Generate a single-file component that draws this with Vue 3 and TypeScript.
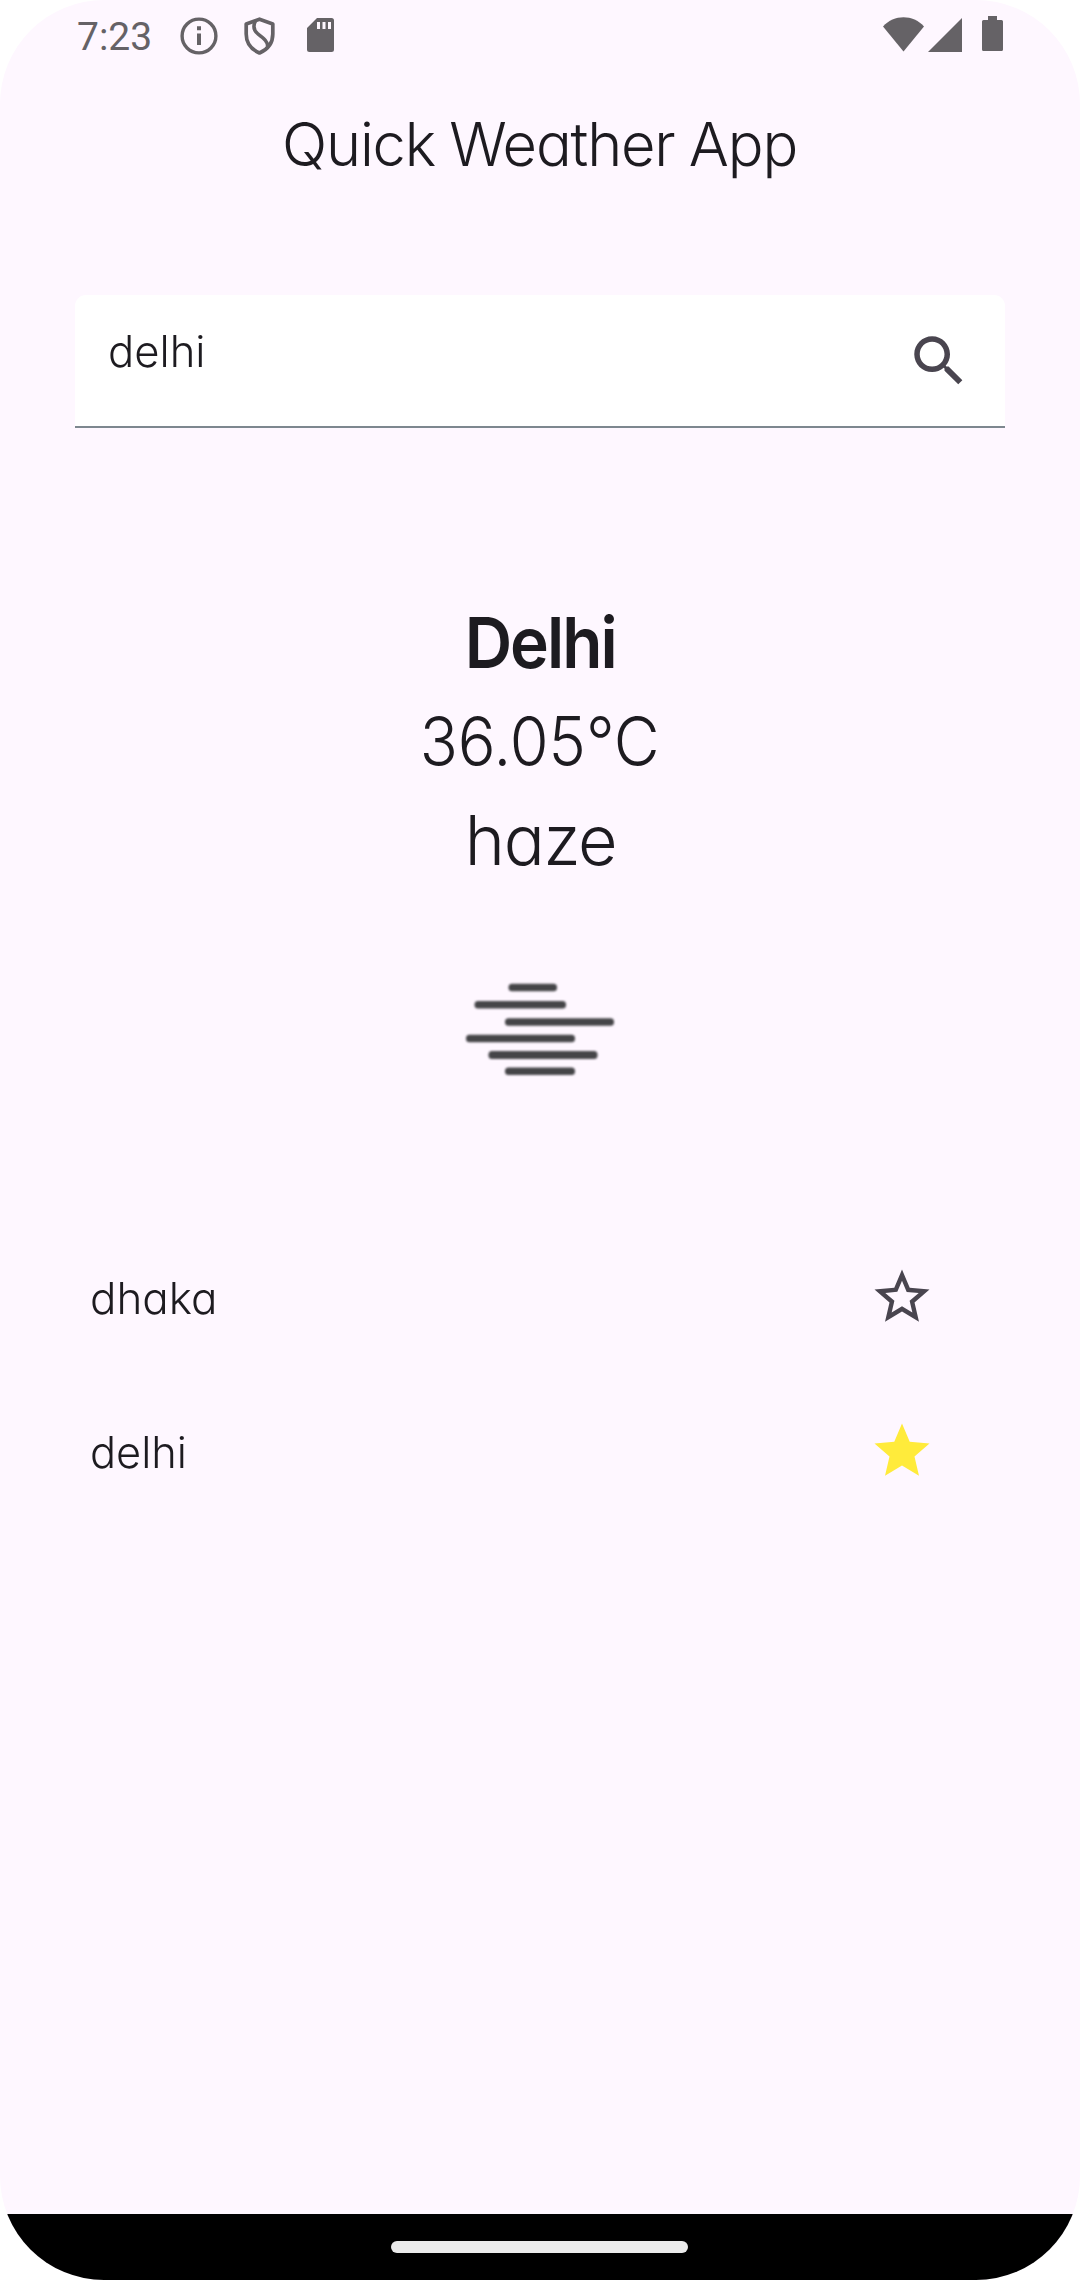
<script setup lang="ts">
import { ref, type Directive } from 'vue'

interface City {
  name: string
  starred: boolean
  width: number
}

const query = ref('delhi')
const cities = ref<City[]>([
  { name: 'dhaka', starred: false, width: 127.5 },
  { name: 'delhi', starred: true, width: 97 },
])

/** Scales a label horizontally so that it fills the given width. */
const vFit: Directive<HTMLElement, number> = {
  mounted(el, { value }) {
    const natural = el.getBoundingClientRect().width
    if (natural > 0) el.style.transform = `scaleX(${value / natural})`
  },
}
</script>

<template>
  <div class="screen">
    <header class="status">
      <span class="clock">7:23</span>
      <svg class="info" width="38" height="38" viewBox="0 0 38 38">
        <circle cx="19" cy="19" r="16.9" fill="none" stroke="currentColor" stroke-width="3.4" />
        <path d="M17 9.300h4v3.900h-4zM17 16.400h4v11.700h-4z" fill="currentColor" />
      </svg>
      <svg class="shield" width="31" height="38" viewBox="0 0 31 38">
        <path d="M15.500 2.200 28.800 6.900V17c0 8.800-4.800 15.300-13.300 19C7 32.300 2.200 25.800 2.200 17V6.900z" fill="none" stroke="currentColor" stroke-width="3.700" stroke-linejoin="round" />
        <path d="M11.500 4C8.800 9 9.200 13 14 17c6.500 5 9.800 7.500 9.600 12.500" fill="none" stroke="currentColor" stroke-width="3.500" />
      </svg>
      <svg class="sd" width="27" height="34" viewBox="0 0 27 34">
        <path fill-rule="evenodd" d="M10 0H24.500A2.500 2.500 0 0 1 27 2.500V31.500A2.500 2.500 0 0 1 24.500 34H2.500A2.500 2.500 0 0 1 0 31.500V10zM10 4V11H13V4zM15.500 4V11H18.500V4zM21 4V11H24V4z" fill="currentColor" />
      </svg>
      <svg class="wifi" width="41" height="35" viewBox="0 0 41 35">
        <path d="M0 9.500C11-2.800 30-2.800 41 9.500L20.500 34.500z" fill="currentColor" />
      </svg>
      <svg class="signal" width="34" height="34" viewBox="0 0 34 34">
        <path d="M34 0V34H0z" fill="currentColor" />
      </svg>
      <svg class="battery" width="21" height="35" viewBox="0 0 21 35">
        <path d="M6 0H15V4H19.500A1.500 1.500 0 0 1 21 5.500V33.500A1.500 1.500 0 0 1 19.500 35H1.500A1.500 1.500 0 0 1 0 33.500V5.500A1.500 1.500 0 0 1 1.500 4H6z" fill="currentColor" />
      </svg>
    </header>

    <h1 class="title"><span v-fit="515" class="label">Quick Weather App</span></h1>

    <div class="search">
      <span v-fit="97.500" class="label query">{{ query }}</span>
      <svg class="icon" viewBox="0 0 24 24">
        <path d="M15.500 14h-.79l-.28-.27C15.410 12.590 16 11.110 16 9.500 16 5.910 13.090 3 9.500 3S3 5.910 3 9.500 5.910 16 9.500 16c1.610 0 3.090-.59 4.230-1.570l.27.28v.79l5 4.990L20.490 19l-4.990-5zm-6 0C7.010 14 5 11.990 5 9.500S7.010 5 9.500 5 14 7.010 14 9.500 11.990 14 9.500 14z" fill="currentColor" />
      </svg>
    </div>

    <main class="weather">
      <div class="city"><span v-fit="151" class="label">Delhi</span></div>
      <div class="temp"><span v-fit="240" class="label">36.05°C</span></div>
      <div class="sky"><span v-fit="151.500" class="label">haze</span></div>
      <svg class="haze" width="150" height="94" viewBox="0 0 150 94" fill="#454548">
        <rect x="43.500" y="1.700" width="48.500" height="7.500" rx="3.500" />
        <rect x="9.500" y="18.900" width="91.500" height="7.500" rx="3.500" />
        <rect x="40" y="36.200" width="109" height="7.500" rx="3.500" />
        <rect x="1" y="52.800" width="109" height="7.500" rx="3.500" />
        <rect x="23.500" y="69.100" width="109" height="7.800" rx="3.500" />
        <rect x="40" y="85.400" width="70" height="7.500" rx="3.500" />
      </svg>
    </main>

    <ul class="list">
      <li v-for="item in cities" :key="item.name" class="row">
        <span v-fit="item.width" class="label">{{ item.name }}</span>
        <svg class="icon" :class="{ starred: item.starred }" viewBox="0 0 24 24">
          <path v-if="item.starred" d="M12 17.270 18.180 21l-1.640-7.030L22 9.240l-7.190-.61L12 2 9.190 8.630 2 9.240l5.460 4.730L5.820 21z" fill="currentColor" />
          <path v-else d="M22 9.240l-7.190-.62L12 2 9.190 8.630 2 9.240l5.460 4.730L5.820 21 12 17.270 18.180 21l-1.630-7.030L22 9.240zM12 15.400l-3.760 2.270 1-4.280-3.320-2.880 4.380-.38L12 6.100l1.710 4.040 4.380.38-3.320 2.880 1 4.280L12 15.400z" fill="currentColor" />
        </svg>
      </li>
    </ul>

    <footer class="nav"><div class="pill"></div></footer>
  </div>
</template>

<style>
body {
  margin: 0;
  background: #fff;
}
</style>

<style scoped>
.screen {
  display: flex;
  flex-direction: column;
  box-sizing: border-box;
  width: 1080px;
  height: 2280px;
  overflow: hidden;
  border-radius: 104px;
  background: #fef7ff;
  color: #1d1b20;
  font-family: Inter, "Liberation Sans", sans-serif;
  font-weight: 300;
  font-feature-settings: "cv11" 1;
}

svg {
  display: block;
  flex: none;
}

.label {
  display: inline-block;
  white-space: nowrap;
}

.status {
  display: flex;
  align-items: flex-start;
  height: 108px;
  padding-left: 77px;
  color: #656266;
}

.clock {
  width: 102.500px;
  margin-top: 12.500px;
  font: 400 39px/48px Roboto, sans-serif;
}

.info {
  margin-top: 16.500px;
}

.shield {
  margin: 16.500px 0 0 26.500px;
}

.sd {
  margin: 18px 0 0 32px;
}

.wifi {
  margin: 17px 0 0 549px;
}

.signal {
  margin: 18px 0 0 4px;
}

.battery {
  margin: 16px 0 0 20px;
}

.title {
  margin: 0;
  font-size: 60px;
  font-weight: 300;
  letter-spacing: -0.020em;
  line-height: 72px;
  text-align: center;
  word-spacing: -0.020em;
}

.search {
  display: flex;
  align-items: center;
  justify-content: space-between;
  box-sizing: border-box;
  height: 133.500px;
  margin: 114.500px 75px 0;
  padding: 1px 33px 0 32.500px;
  border-bottom: 2px solid #7d878f;
  border-radius: 11px 11px 0 0;
  background: #fff;
}

.query {
  margin-bottom: 19px;
  font-size: 44px;
  line-height: 60px;
  transform-origin: left center;
}

.icon {
  width: 66px;
  height: 66px;
  color: #49454f;
}

.weather {
  display: flex;
  flex-direction: column;
  align-items: center;
  height: 671.500px;
  padding-top: 165.500px;
  box-sizing: border-box;
  line-height: 98.500px;
}

.city {
  font-size: 70.600px;
  font-weight: 600;
  letter-spacing: -0.030em;
}

.temp {
  margin-left: -1px;
  font-size: 68px;
}

.sky {
  margin-left: 2px;
  font-size: 69px;
  letter-spacing: -0.020em;
}

.haze {
  margin-top: 92.500px;
  filter: blur(1px);
}

.list {
  display: flex;
  flex-direction: column;
  gap: 88px;
  margin: 165px 0 0;
  padding: 0 145px 0 90px;
  list-style: none;
}

.row {
  display: flex;
  align-items: center;
  justify-content: space-between;
  height: 66px;
  font-size: 44px;
  line-height: 66px;
}

.row .label {
  transform-origin: left center;
}

.row .icon {
  margin-bottom: 2px;
}

.row .starred {
  color: #ffeb3b;
}

.nav {
  display: flex;
  justify-content: center;
  height: 66px;
  margin-top: auto;
  background: #000;
}

.pill {
  width: 297px;
  height: 12px;
  margin: 27px 1px 0 0;
  border-radius: 6px;
  background: #ebebeb;
}
</style>
